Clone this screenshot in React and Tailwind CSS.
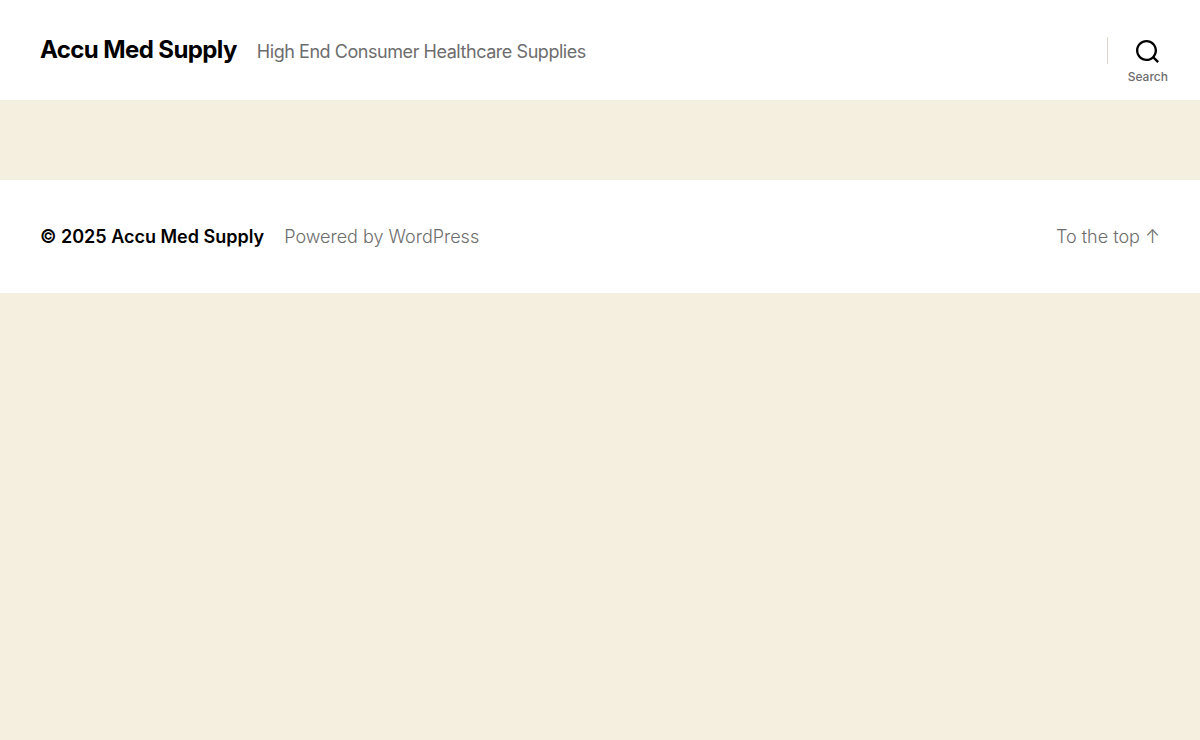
function SearchIcon() {
  return (
    <svg
      aria-hidden="true"
      width="23"
      height="23"
      viewBox="0 0 23 23"
      fill="currentColor"
    >
      <path d="M38.710696,48.0601792 L43,52.3494831 L41.3494831,54 L37.0601792,49.710696 C35.2632422,51.1481185 32.9839107,52.0076499 30.5038249,52.0076499 C24.7027226,52.0076499 20,47.3049272 20,41.5038249 C20,35.7027226 24.7027226,31 30.5038249,31 C36.3049272,31 41.0076499,35.7027226 41.0076499,41.5038249 C41.0076499,43.9839107 40.1481185,46.2632422 38.710696,48.0601792 Z M36.3875844,47.1716785 C37.8030221,45.7026647 38.6734666,43.7048964 38.6734666,41.5038249 C38.6734666,36.9918565 35.0157934,33.3341833 30.5038249,33.3341833 C25.9918565,33.3341833 22.3341833,36.9918565 22.3341833,41.5038249 C22.3341833,46.0157934 25.9918565,49.6734666 30.5038249,49.6734666 C32.7048964,49.6734666 34.7026647,48.8030221 36.1716785,47.3875844 C36.2023931,47.347638 36.2360451,47.3092237 36.2726343,47.2726343 C36.3092237,47.2360451 36.347638,47.2023931 36.3875844,47.1716785 Z" transform="translate(-20 -31)" />
    </svg>
  );
}

export default function App() {
  return (
    <div className="min-h-screen bg-[#f5efe0] font-['Inter',sans-serif] text-lg text-black">
      {/* Header */}
      <header className="flex items-start justify-between bg-white pl-10">
        <div className="flex items-baseline gap-5 py-[34px]">
          <h1 className="text-2xl font-bold tracking-tight">
            <a href="#">Accu Med Supply</a>
          </h1>
          <p className="tracking-tight text-[#6d6d6d]">
            High End Consumer Healthcare Supplies
          </p>
        </div>

        <div className="flex items-start pt-9 pr-8">
          <span className="mt-px h-[27px] w-px bg-[#dcd7ca]" />
          <button type="button" className="ml-5 flex flex-col items-center gap-1.5 pt-1">
            <SearchIcon />
            <span className="text-xs font-medium text-[#6d6d6d]">Search</span>
          </button>
        </div>
      </header>

      <main className="h-20" />

      {/* Footer */}
      <footer className="flex items-center justify-between bg-white px-10 py-10 leading-[33px]">
        <div className="flex items-baseline gap-5">
          <p className="font-semibold">
            &copy; 2025 <a href="#">Accu Med Supply</a>
          </p>
          <p className="font-light text-[#6d6d6d]">
            <a href="#">Powered by WordPress</a>
          </p>
        </div>
        <a href="#" className="font-light text-[#6d6d6d]">
          To the top <span aria-hidden="true">↑</span>
        </a>
      </footer>
    </div>
  );
}
